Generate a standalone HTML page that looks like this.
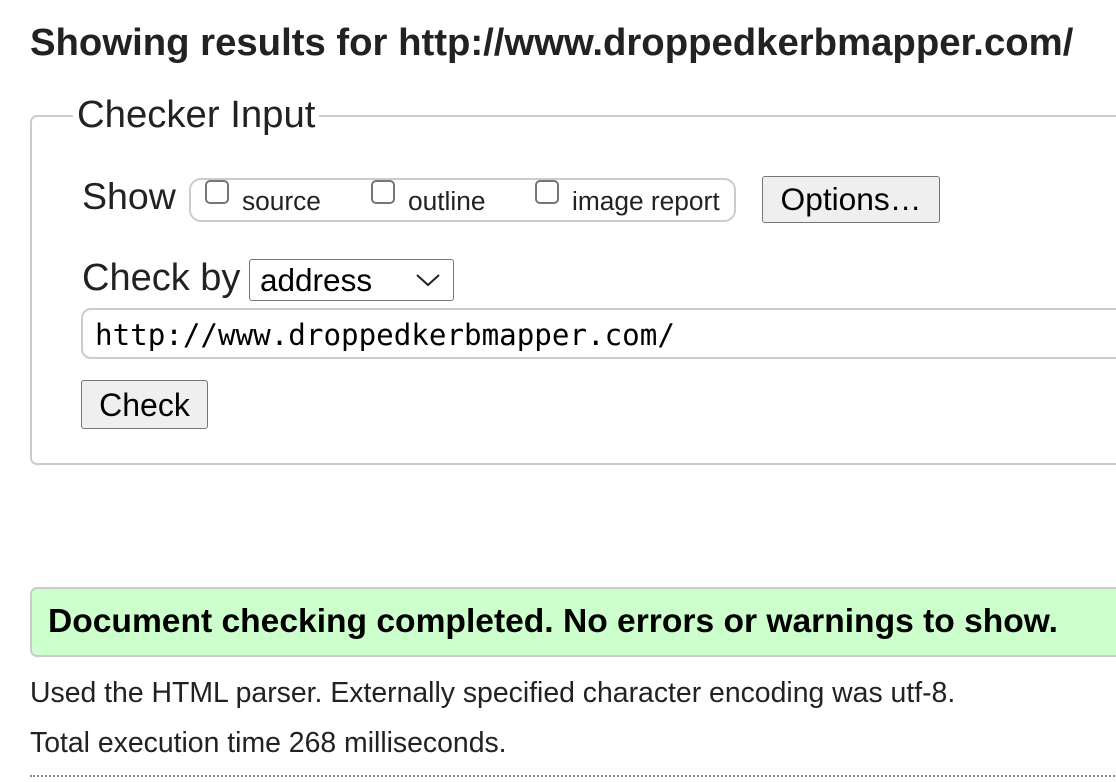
<!DOCTYPE html>
<html><head><style>
body{margin:0;width:1116px;height:782px;overflow:hidden;background:#fff;font-family:"Liberation Sans",Arial,sans-serif;color:#222;position:relative}
.a{position:absolute;white-space:nowrap;line-height:1}
.btn{position:absolute;background:#efefef;border:1px solid #767676;border-radius:3px;box-sizing:border-box;color:#000}
.cb{position:absolute;width:24px;height:24px;border:2px solid #767676;border-radius:5px;box-sizing:border-box;background:#fff;top:180px}
</style></head><body>
<div class="a" style="left:30px;top:24px;font-size:38.3px;font-weight:bold">Showing results for http://www.droppedkerbmapper.com/</div>
<div style="position:absolute;left:30px;top:115px;width:1200px;height:350px;border:2px solid #ccc;border-radius:7px;box-sizing:border-box"></div>
<div class="a" style="left:73px;top:96px;font-size:38.3px;background:#fff;padding:0 4px">Checker Input</div>
<div class="a" style="left:82px;top:178px;font-size:37.5px">Show</div>
<div style="position:absolute;left:189px;top:178px;width:547px;height:44px;border:2px solid #ccc;border-radius:12px;box-sizing:border-box"></div>
<div class="cb" style="left:205px"></div><div class="a" style="left:242px;top:188px;font-size:26.3px">source</div>
<div class="cb" style="left:371px"></div><div class="a" style="left:408px;top:188px;font-size:26.3px">outline</div>
<div class="cb" style="left:535px"></div><div class="a" style="left:572px;top:188px;font-size:26.3px">image report</div>
<div class="btn" style="left:762px;top:176px;width:178px;height:47px;font-size:31.7px;text-align:center;line-height:45px">Options…</div>
<div class="a" style="left:82px;top:259px;font-size:38px">Check by</div>
<div style="position:absolute;left:249px;top:259px;width:205px;height:42px;border:1px solid #767676;border-radius:3px;box-sizing:border-box"></div>
<div class="a" style="left:260px;top:265px;font-size:31.5px;color:#000">address</div>
<svg style="position:absolute;left:415px;top:272px" width="26" height="16"><path d="M2 3 L13 13 L24 3" fill="none" stroke="#222" stroke-width="2"/></svg>
<div style="position:absolute;left:81px;top:308px;width:1100px;height:51px;border:2px solid #ccc;border-radius:10px;box-sizing:border-box"></div>
<div class="a" style="left:95px;top:321px;font-size:29.2px;font-family:'DejaVu Sans Mono','Liberation Mono',monospace;color:#000">http://www.droppedkerbmapper.com/</div>
<div class="btn" style="left:81px;top:380px;width:127px;height:49px;font-size:32px;text-align:center;line-height:49px">Check</div>
<div style="position:absolute;left:30px;top:587px;width:1200px;height:70px;background:#ccffcc;border:2px solid #ccc;border-radius:7px;box-sizing:border-box"></div>
<div class="a" style="left:48px;top:605px;font-size:33.6px;font-weight:bold;color:#000">Document checking completed. No errors or warnings to show.</div>
<div class="a" style="left:30px;top:679px;font-size:28.4px">Used the HTML parser. Externally specified character encoding was utf-8.</div>
<div class="a" style="left:30px;top:729px;font-size:28.4px">Total execution time 268 milliseconds.</div>
<div style="position:absolute;left:30px;top:775px;width:1100px;border-top:2px dotted #888"></div>
</body></html>
